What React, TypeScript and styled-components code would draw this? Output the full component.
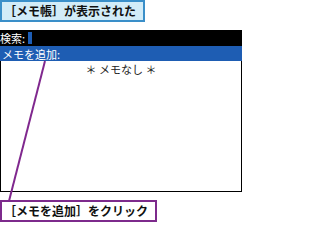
import React from "react";
import styled, { createGlobalStyle } from "styled-components";

const Global = createGlobalStyle`
  html, body { margin: 0; padding: 0; background: #fff; }
  body { width: 242px; height: 222px; overflow: hidden; font-family: "Noto Sans CJK JP", "Noto Sans", sans-serif; }
`;

const Page = styled.div`
  position: relative;
  width: 242px;
  height: 222px;
  display: flex;
  flex-direction: column;
`;

const Callout = styled.div<{ $tone: "blue" | "purple"; $w: number }>`
  box-sizing: border-box;
  width: ${(p) => p.$w}px;
  height: 22px;
  border: 2px solid ${(p) => (p.$tone === "blue" ? "#3a8fc9" : "#7d2a8c")};
  background: ${(p) => (p.$tone === "blue" ? "#d2ecf8" : "#ffffff")};
  display: flex;
  align-items: center;
  padding-left: 2px;
  font-size: 12px;
  font-weight: 700;
  color: #111;
  line-height: 1;
  white-space: nowrap;
`;

const Screen = styled.div`
  margin: 8px 0;
  height: 162px;
  display: flex;
  flex-direction: column;
`;

const SearchBar = styled.div`
  height: 16px;
  background: #000;
  color: #fff;
  display: flex;
  align-items: center;
  font-size: 11px;
  gap: 3px;
`;

const Cursor = styled.span`
  width: 4px;
  height: 12px;
  background: #1d5db5;
`;

const AddRow = styled.div`
  height: 15px;
  background: #1e5db3;
  color: #fff;
  display: flex;
  align-items: center;
  padding-left: 2px;
  font-size: 11px;
`;

const Body = styled.div`
  flex: 1;
  border: 1px solid #000;
  border-top: none;
  display: flex;
  justify-content: center;
  padding-top: 3px;
  font-size: 11px;
  color: #222;
  line-height: 1;
`;

const Pointer = styled.svg`
  position: absolute;
  left: 0;
  top: 0;
  pointer-events: none;
`;

export default function App() {
  return (
    <>
      <Global />
      <Page>
        <Callout $tone="blue" $w={145}>［メモ帳］が表示された</Callout>
        <Screen>
          <SearchBar>
            <span>検索:</span>
            <Cursor />
          </SearchBar>
          <AddRow>メモを追加:</AddRow>
          <Body>＊ メモなし ＊</Body>
        </Screen>
        <Callout $tone="purple" $w={157}>［メモを追加］をクリック</Callout>
        <Pointer width="242" height="222" viewBox="0 0 242 222">
          <line x1="45" y1="61" x2="9" y2="201" stroke="#80288e" strokeWidth="2" />
        </Pointer>
      </Page>
    </>
  );
}
